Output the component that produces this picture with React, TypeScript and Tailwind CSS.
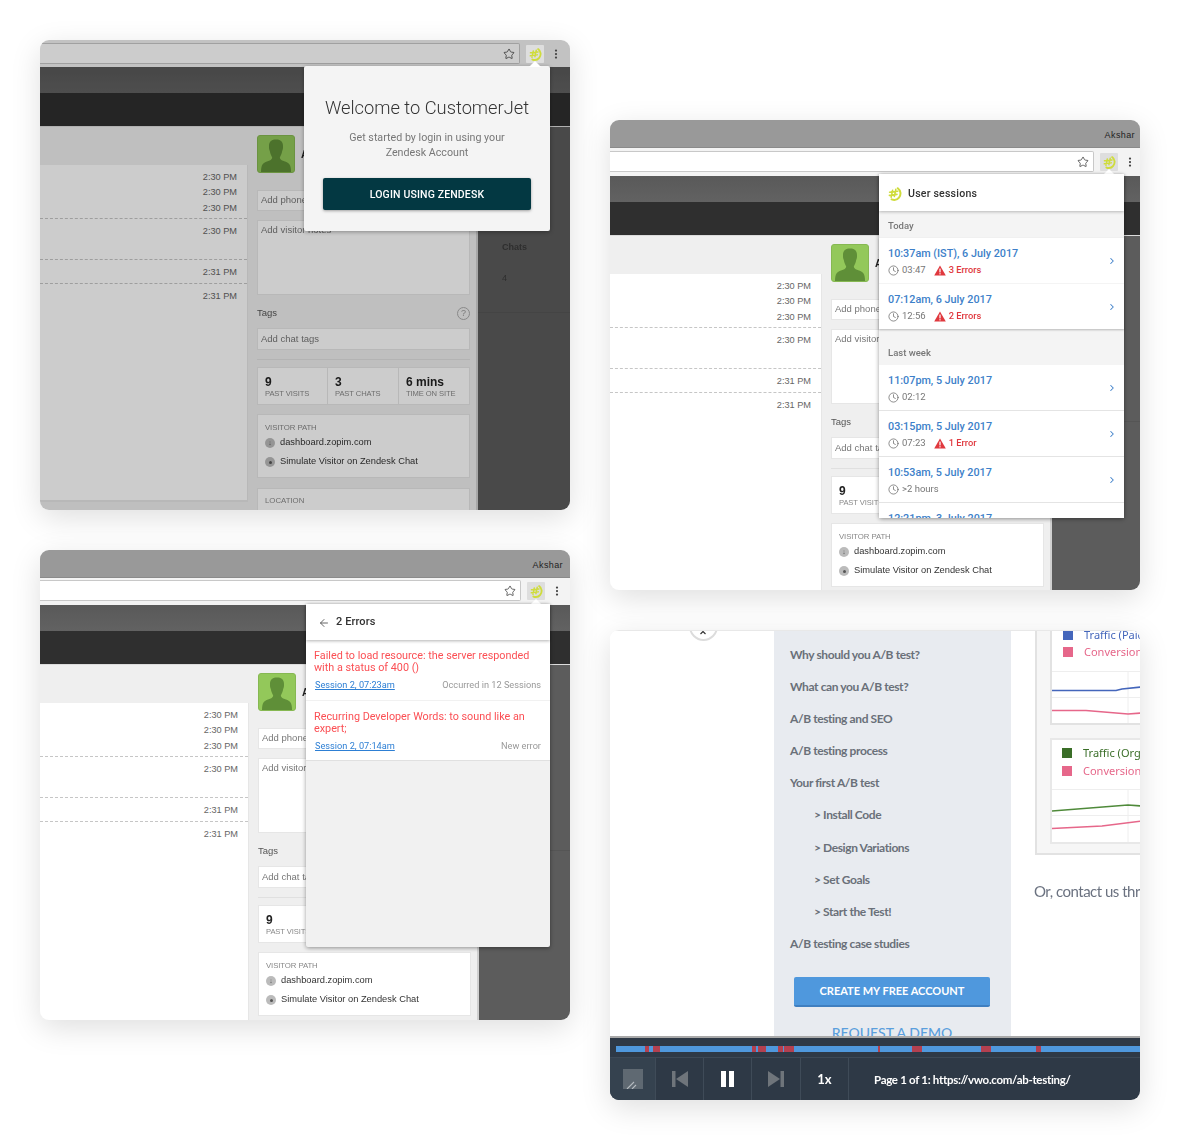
import React from "react";
import { Star, EllipsisVertical, Clock, ChevronRight, ArrowLeft } from "lucide-react";

const Logo = ({ size = 14 }: { size?: number }) => (
  <svg width={size} height={size} viewBox="0 0 14 14" fill="none" stroke="#cfdc3c" strokeLinecap="round">
    <path d="M9.8 1.2C12.8 3.4 13.4 7.6 11 10.6C9.4 12.6 6.4 13.4 3.6 12.4" strokeWidth="2" />
    <path d="M4.6 3.2L3.2 10.2M7.8 2.4L6.4 9.4M1.6 5.2L9.8 4.2M1.4 8.4L9 7.4" strokeWidth="1.6" />
  </svg>
);

const Avatar = () => (
  <div className="w-[38px] h-[38px] shrink-0 rounded-[3px] bg-[#93c85a] border border-[#86b852] overflow-hidden">
    <svg width="36" height="36" viewBox="0 0 36 36">
      <path
        d="M11 10C11 5 14 3.5 18 3.5C22 3.5 25 5 25 10C25 12 25 13.500 24.200 15C23.800 18 22.500 20 21.800 21.500C21.800 23.500 24 24.500 27 25.500C31 26.800 33 28.500 33 36H3C3 28.500 5 26.800 9 25.500C12 24.500 14.200 23.500 14.200 21.500C13.500 20 12.200 18 11.800 15C11 13.500 11 12 11 10Z"
        fill="#5f8f38"
      />
    </svg>
  </div>
);

const Field = ({ className, children }: { className: string; children: React.ReactNode }) => (
  <div className={`bg-white border border-[#e6e6e6] px-[3px] text-[9.5px] leading-[18px] text-[#777] whitespace-nowrap overflow-hidden ${className}`}>
    {children}
  </div>
);

const Stat = ({ n, label, wide }: { n: string; label: string; wide?: string }) => (
  <div className={`${wide} h-full px-[7px] pt-[8px] border-r border-[#e6e6e6] last:border-r-0`}>
    <div className="text-[12px] leading-[12px] font-bold text-[#222]">{n}</div>
    <div className="mt-px text-[7.600px] leading-[10px] text-[#888] whitespace-nowrap tracking-[-0.1px]">{label}</div>
  </div>
);

function Background({ leftW }: { leftW: string }) {
  const times = [
    { h: "h-[54px]", t: ["2:30 PM", "2:30 PM", "2:30 PM"] },
    { h: "h-[41px]", t: ["2:30 PM"] },
    { h: "h-[24px]", t: ["2:31 PM"] },
    { h: "", t: ["2:31 PM"] },
  ];
  return (
    <div className="font-['Liberation_Sans',sans-serif]">
      <div className="h-[26px] bg-gradient-to-b from-[#595959] to-[#626262]" />
      <div className="h-[33px] bg-[#2f2f2f]" />
      <div className="h-px bg-[#dcdcdc]" />
      <div className="flex bg-[#efefef] h-[385px]">
        <div className={`${leftW} shrink-0 pt-[38px]`}>
          <div className="bg-white border-r border-b-2 border-[#e6e6e6] h-[337px] pr-[10px] text-[9.2px] text-[#666] text-right">
            {times.map((b, i) => (
              <div key={i} className={`${b.h} pt-[5px] ${i < 3 ? "border-b border-dashed border-[#c6c6c6] -mr-[10px] pr-[10px]" : ""}`}>
                {b.t.map((x, j) => (
                  <div key={j} className="h-[15.300px] leading-[15px]">{x}</div>
                ))}
              </div>
            ))}
          </div>
        </div>
        <div className="w-[230px] shrink-0 pl-[9px] pr-[6px] pt-[8px] border-r-2 border-[#d0d0d0]">
          <div className="flex items-center gap-[6px]">
            <Avatar />
            <span className="text-[10px] font-bold text-[#222]">Akshar</span>
          </div>
          <Field className="mt-[17px] h-[21px]">Add phone number</Field>
          <Field className="mt-[9px] h-[75px]">Add visitor notes</Field>
          <div className="mt-[9px] mb-[6px] h-[18px] flex items-center justify-between text-[9.5px] text-[#555]">
            <span>Tags</span>
            <span className="w-[13px] h-[13px] rounded-full border border-[#aaa] text-[9px] leading-[11px] text-center text-[#999]">?</span>
          </div>
          <Field className="h-[22px] leading-[20px]">Add chat tags</Field>
          <div className="h-px bg-[#e0e0e0] mt-[9px] mb-[7px]" />
          <div className="flex items-start h-[38px] bg-white border border-[#e6e6e6]">
            <Stat n="9" label="PAST VISITS" wide="w-[70px]" />
            <Stat n="3" label="PAST CHATS" wide="w-[71px]" />
            <Stat n="6 mins" label="TIME ON SITE" wide="flex-1" />
          </div>
          <div className="mt-[9px] h-[64px] bg-white border border-[#e6e6e6] px-[7px] pt-[8px]">
            <div className="text-[7.800px] leading-[10px] text-[#888] tracking-[-0.1px]">VISITOR PATH</div>
            <div className="mt-[3px] flex items-center gap-[5px] h-[14px] text-[9.300px] text-[#333] whitespace-nowrap">
              <span className="w-[10px] h-[10px] rounded-full bg-[#bbb] text-[7px] leading-[10px] text-center text-[#555]">↓</span>
              dashboard.zopim.com
            </div>
            <div className="mt-[5px] flex items-center gap-[5px] h-[14px] text-[9.300px] text-[#333] whitespace-nowrap">
              <span className="w-[10px] h-[10px] rounded-full bg-[#bbb] flex items-center justify-center">
                <span className="w-[3px] h-[3px] rounded-full bg-[#555]" />
              </span>
              Simulate Visitor on Zendesk Chat
            </div>
          </div>
          <div className="mt-[10px] h-[40px] bg-white border border-[#e6e6e6] px-[7px] pt-[7px] text-[7.800px] leading-[10px] text-[#888]">LOCATION</div>
        </div>
        <div className="flex-1 bg-[#5c5c5c]">
          <div className="h-[186px] pl-[24px] pt-[114px] border-b border-[#555] text-[9px] text-[#3a3a3a]">
            <div className="font-bold leading-[12px]">Chats</div>
            <div className="mt-[19px] leading-[12px]">4</div>
          </div>
        </div>
      </div>
    </div>
  );
}

function Toolbar({ title, bar, addr, nameCls }: { title: boolean; bar: string; addr: string; nameCls?: string }) {
  return (
    <div className="font-['Liberation_Sans',sans-serif]">
      {title && (
        <div className={`h-[28px] bg-[#999] border-b border-[#8a8a8a] flex items-end justify-end pb-[5px] text-[9px] text-[#222] tracking-[0.4px] ${nameCls ?? ""}`}>
          Akshar
        </div>
      )}
      <div className={`${bar} bg-[#f3f3f3] flex`}>
        <div className={`${addr} h-[21px] bg-white border border-l-0 border-[#c8c8c8] rounded-r-[2px] flex items-center justify-end pr-[4px]`}>
          <Star size={12} strokeWidth={1.5} className="text-[#333]" />
        </div>
        <div className="relative z-20 ml-[6px] mt-[2px] w-[18px] h-[18px] rounded-[1px] bg-[#dedede] flex items-center justify-center">
          <Logo size={13} />
        </div>
        <EllipsisVertical size={12} strokeWidth={2.500} className="relative z-20 ml-[6px] mt-[5px] text-[#444]" />
      </div>
    </div>
  );
}

const Caret = ({ pos }: { pos: string }) => (
  <div className={`absolute -top-[5px] ${pos} w-0 h-0 border-x-[6px] border-x-transparent border-b-[6px] border-b-white`} />
);

const Win = ({ className, children }: { className?: string; children: React.ReactNode }) => (
  <div className="rounded-[9px] shadow-[0_8px_30px_rgba(0,0,0,0.13)]">
    <div className={`relative w-[530px] h-[470px] rounded-[9px] overflow-hidden blur-[0.3px] ${className ?? ""}`}>
      {children}
    </div>
  </div>
);

function LoginWindow() {
  return (
    <Win>
      <Toolbar title={false} bar="h-[27px] pt-[3px]" addr="w-[480px]" />
      <Background leftW="w-[208px]" />
      <div className="absolute inset-0 z-10 bg-black/20" />
      <div className="absolute z-30 left-[264px] top-[26px] w-[246px] h-[165px] bg-[#f4f4f4] rounded-[2px] shadow-[0_1px_4px_rgba(0,0,0,0.35)] font-['Roboto',sans-serif] text-center">
        <Caret pos="left-[225px]" />
        <div className="pt-[29px] text-[18.300px] leading-[26px] font-light text-[#333]">Welcome to CustomerJet</div>
        <div className="mt-[9px] text-[10.700px] leading-[15px] text-[#777]">
          Get started by login in using your
          <br />
          Zendesk Account
        </div>
        <div className="mx-[19px] mt-[18px] h-[32px] rounded-[2px] bg-[#033842] shadow-[0_1px_3px_rgba(0,0,0,0.35)] text-white text-[10.500px] font-medium leading-[33px] tracking-[0.15px]">
          LOGIN USING ZENDESK
        </div>
      </div>
    </Win>
  );
}

const Triangle = () => (
  <svg width="12" height="11" viewBox="0 0 12 11">
    <path d="M6 0.500L11.800 10.500H0.200Z" fill="#e0383e" />
    <rect x="5.400" y="3.600" width="1.200" height="3.800" fill="#fff" />
    <rect x="5.400" y="8.200" width="1.200" height="1.200" fill="#fff" />
  </svg>
);

function Session({ title, time, errors, className }: { title: string; time: string; errors?: string; className: string }) {
  return (
    <div className={`relative bg-white pl-[9px] pt-[9px] shrink-0 ${className}`}>
      <div className="text-[10.800px] leading-[14px] font-medium text-[#3d7fc9] whitespace-nowrap">{title}</div>
      <div className="mt-[2px] flex items-center h-[14px] text-[9.500px] text-[#777]">
        <Clock size={11} strokeWidth={1.600} className="mr-[3px] text-[#666]" />
        <span>{time}</span>
        {errors && (
          <>
            <span className="ml-[8px] mr-[3px]"><Triangle /></span>
            <span className="text-[9.300px] font-medium text-[#e0383e]">{errors}</span>
          </>
        )}
      </div>
      <ChevronRight size={10} strokeWidth={2.500} className="absolute right-[7px] top-[18px] text-[#3d7fc9]" />
    </div>
  );
}

function SessionsWindow() {
  return (
    <Win>
      <Toolbar title bar="h-[28px] pt-[3px]" addr="w-[484px]" nameCls="pr-[5px]" />
      <Background leftW="w-[212px]" />
      <div className="absolute z-30 left-[269px] top-[54px] w-[245px] h-[344px] bg-[#f4f4f4] rounded-[2px] shadow-[0_1px_4px_rgba(0,0,0,0.4)] font-['Roboto',sans-serif] flex flex-col">
        <Caret pos="left-[224px]" />
        <div className="h-[37px] shrink-0 bg-white flex items-center pl-[9px] pt-[2px] gap-[6px] shadow-[0_1px_3px_rgba(0,0,0,0.25)] relative">
          <Logo size={14} />
          <span className="text-[10.600px] font-medium text-[#333] tracking-[0.2px]">User sessions</span>
        </div>
        <div className="h-[27px] shrink-0 pl-[9px] text-[9.500px] font-medium leading-[30px] text-[#777]">Today</div>
        <div className="shadow-[0_1px_2px_rgba(0,0,0,0.25)] shrink-0">
          <Session className="h-[45px] mb-[1px]" title="10:37am (IST), 6 July 2017" time="03:47" errors="3 Errors" />
          <Session className="h-[45px]" title="07:12am, 6 July 2017" time="12:56" errors="2 Errors" />
        </div>
        <div className="h-[36px] shrink-0 pl-[9px] pt-[13px] text-[9.500px] font-medium leading-[22px] text-[#777]">Last week</div>
        <div className="h-[153px] overflow-hidden bg-[#e4e4e4]">
          <Session className="h-[45px] mb-px" title="11:07pm, 5 July 2017" time="02:12" />
          <Session className="h-[45px] mb-px" title="03:15pm, 5 July 2017" time="07:23" errors="1 Error" />
          <Session className="h-[45px] mb-px" title="10:53am, 5 July 2017" time=">2 hours" />
          <Session className="h-[45px]" title="12:21pm, 3 July 2017" time="04:03" />
        </div>
      </div>
    </Win>
  );
}

function ErrorItem({ lines, link, note, className }: { lines: string[]; link: string; note: string; className: string }) {
  return (
    <div className={`bg-white px-[8px] pt-[10px] shrink-0 ${className}`}>
      <div className="text-[10.800px] leading-[12px] text-[#fb4f54]">
        {lines.map((l) => (
          <div key={l}>{l}</div>
        ))}
      </div>
      <div className="mt-[5px] pl-px pr-[1px] flex justify-between text-[9.200px] leading-[12px]">
        <span className="text-[#2d7fd4] underline">{link}</span>
        <span className="text-[#999]">{note}</span>
      </div>
    </div>
  );
}

function ErrorsWindow() {
  return (
    <Win>
      <Toolbar title bar="h-[27px] pt-[2px]" addr="w-[481px]" nameCls="pr-[7px]" />
      <Background leftW="w-[209px]" />
      <div className="absolute z-30 left-[266px] top-[54px] w-[244px] h-[343px] bg-[#f1f1f1] rounded-[2px] shadow-[0_1px_4px_rgba(0,0,0,0.4)] font-['Roboto',sans-serif] flex flex-col">
        <Caret pos="left-[224px]" />
        <div className="h-[36px] shrink-0 relative bg-white flex items-center pt-px pl-[12px] gap-[6px] shadow-[0_1px_3px_rgba(0,0,0,0.3)]">
          <ArrowLeft size={12} strokeWidth={1.800} className="text-[#555]" />
          <span className="text-[11px] font-medium text-[#333] tracking-[0.1px]">2 Errors</span>
        </div>
        <ErrorItem className="h-[60px] mb-px" lines={["Failed to load resource: the server responded", "with a status of 400 ()"]} link="Session 2, 07:23am" note="Occurred in 12 Sessions" />
        <ErrorItem className="h-[60px] border-b border-[#e0e0e0]" lines={["Recurring Developer Words: to sound like an", "expert;"]} link="Session 2, 07:14am" note="New error" />
      </div>
    </Win>
  );
}

const Legend = ({ color, text, textColor, className }: { color: string; text: string; textColor: string; className: string }) => (
  <div className={`flex items-center whitespace-nowrap text-[11px] leading-[12px] font-['Noto_Sans',sans-serif] ${className}`}>
    <span className={`w-[10px] h-[10px] shrink-0 ${color}`} />
    <span className={`ml-[11px] ${textColor}`}>{text}</span>
  </div>
);

const Chart = ({ a, b, aColor }: { a: string; b: string; aColor: string }) => (
  <svg width="90" height="53" viewBox="0 0 90 53" className="block">
    <line x1="0" y1="0.500" x2="90" y2="0.500" stroke="#eee" />
    <line x1="0" y1="26.500" x2="90" y2="26.500" stroke="#eee" />
    <line x1="76" y1="0" x2="76" y2="53" stroke="#eee" />
    <path d={a} fill="none" stroke={aColor} strokeWidth="1.700" />
    <path d={b} fill="none" stroke="#e6678a" strokeWidth="1.700" />
  </svg>
);

function SkipIcon({ flip }: { flip?: boolean }) {
  return (
    <svg width="16" height="16" viewBox="0 0 16 16" className={flip ? "-scale-x-100" : ""}>
      <rect x="0" y="0" width="3.500" height="16" fill="#6f757b" />
      <path d="M16 0V16L4 8Z" fill="#6f757b" />
    </svg>
  );
}

function PlayerWindow() {
  const nav = [
    "Why should you A/B test?",
    "What can you A/B test?",
    "A/B testing and SEO",
    "A/B testing process",
    "Your first A/B test",
    "> Install Code",
    "> Design Variations",
    "> Set Goals",
    "> Start the Test!",
    "A/B testing case studies",
  ];
  const progress = [29, 4, 4, 7, 92, 4, 2, 8, 12, 5, 1, 10, 84, 2, 32, 10, 59, 10, 45, 5, 99];
  return (
    <Win className="bg-white font-['Lato',sans-serif]">
      <div className="h-[406px] flex overflow-hidden border-t border-[#e8e8e8]">
        <div className="w-[164px] shrink-0 relative">
          <div className="absolute left-[79px] -top-[19px] w-[29px] h-[29px] rounded-full border-2 border-[#dcdcdc] bg-white" />
          <svg width="6" height="4" viewBox="0 0 6 4" className="absolute left-[90px] top-0">
            <path d="M0.500 3L3 0.500L5.500 3" fill="none" stroke="#333" strokeWidth="1.200" />
          </svg>
        </div>
        <div className="w-[237px] shrink-0 bg-[#e8ebf0] pt-[15px] pl-[16px] h-[406px] overflow-hidden">
          {nav.map((n) => (
            <div key={n} className={`h-[32.100px] leading-[18px] text-[12px] font-bold tracking-[-0.4px] text-[#6a7079] whitespace-nowrap ${n.startsWith(">") ? "pl-[24px]" : ""}`}>
              {n}
            </div>
          ))}
          <div className="ml-[4px] mt-[10px] w-[196px] h-[30px] rounded-[2px] bg-[#4f98dd] border-b-2 border-[#3f7fc0] text-white text-[11px] font-bold text-center leading-[27px]">
            CREATE MY FREE ACCOUNT
          </div>
          <div className="mt-[17px] ml-[4px] w-[196px] text-center text-[14px] leading-[18px] font-medium text-[#5b9fdd]">REQUEST A DEMO</div>
        </div>
        <div className="pl-[24px] flex-1 overflow-hidden">
          <div className="h-[230px] bg-[#f6f6f6] border-b-2 border-l-2 border-[#e2e2e2] pl-[13px] -mt-[6px]">
            <div className="h-[100px] bg-white border-b-2 border-l-2 border-[#e2e2e2] overflow-hidden pt-[4px] pl-[11px]">
              <Legend className="h-[12px]" color="bg-[#4466bb]" text="Traffic (Paid)" textColor="text-[#4466bb]" />
              <Legend className="mt-[5px] h-[12px]" color="bg-[#e6678a]" text="Conversion" textColor="text-[#e6678a]" />
              <div className="-ml-[11px] mt-[13px]"><Chart aColor="#4466bb" a="M0 19.500H64L70 18L90 16" b="M0 39.500H34L76 43L90 42" /></div>
            </div>
            <div className="mt-[13px] h-[106px] bg-white border-t-2 border-l-2 border-b-2 border-[#e8e8e8] overflow-hidden pt-[7px] pl-[10px]">
              <Legend className="h-[12px]" color="bg-[#3a6e28]" text="Traffic (Organic)" textColor="text-[#3a6e28]" />
              <Legend className="mt-[6px] h-[12px]" color="bg-[#e6678a]" text="Conversion" textColor="text-[#e6678a]" />
              <div className="-ml-[10px] mt-[12px]"><Chart aColor="#4f8a3a" a="M0 22L76 16L90 17" b="M0 39.500L50 37L90 32" /></div>
            </div>
          </div>
          <div className="mt-[26px] -ml-px text-[15px] leading-[20px] tracking-[-0.5px] text-[#6b7280] whitespace-nowrap">Or, contact us through</div>
        </div>
      </div>
      <div className="h-[64px] bg-[#2e3946] border-t-2 border-[#a9a9a9]">
        <div className="h-[20px] pt-[8px] pl-[6px] flex border-b border-[#3d4956]">
          {progress.map((w, i) => (
            <div key={i} className={`h-[6px] shrink-0 ${i % 2 === 0 ? "bg-[#4f98dd]" : "bg-[#b34050]"}`} style={{ width: w }} />
          ))}
        </div>
        <div className="h-[42px] flex items-center text-white">
          <div className="w-[46px] h-full bg-[#35424f] border-r border-[#3f4b58] flex items-center justify-center">
            <svg width="20" height="20" viewBox="0 0 20 20">
              <rect width="20" height="20" fill="#5f6972" />
              <path d="M4 20L11 13M9 20L13 16" stroke="#b4babf" strokeWidth="1.100" />
            </svg>
          </div>
          <div className="w-[48px] h-full border-r border-[#3f4b58] flex items-center justify-center"><SkipIcon /></div>
          <div className="w-[48px] h-full border-r border-[#3f4b58] flex items-center justify-center gap-[3px]">
            <span className="w-[5px] h-[16px] bg-white" />
            <span className="w-[5px] h-[16px] bg-white" />
          </div>
          <div className="w-[49px] h-full border-r border-[#3f4b58] flex items-center justify-center"><SkipIcon flip /></div>
          <div className="w-[48px] h-full border-r border-[#3f4b58] flex items-center justify-center pt-px text-[13px] font-bold">1x</div>
          <div className="pl-[25px] pt-px text-[11.500px] font-bold tracking-[-0.3px] whitespace-nowrap">Page 1 of 1: https://vwo.com/ab-testing/</div>
        </div>
      </div>
    </Win>
  );
}

export default function App() {
  return (
    <div className="w-[1180px] h-[1142px] bg-white flex gap-[40px] pl-[40px] pt-[40px] overflow-hidden">
      <div className="flex flex-col gap-[40px]">
        <LoginWindow />
        <ErrorsWindow />
      </div>
      <div className="flex flex-col gap-[40px] pt-[80px]">
        <SessionsWindow />
        <PlayerWindow />
      </div>
    </div>
  );
}
